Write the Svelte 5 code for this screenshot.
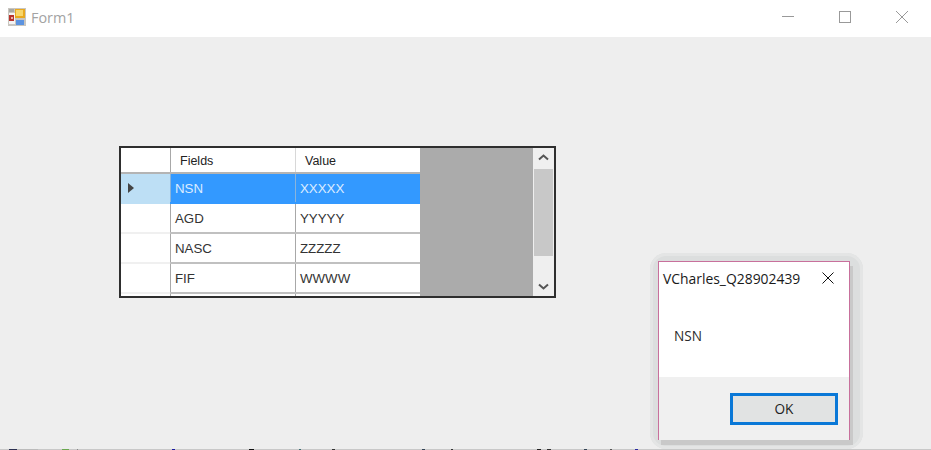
<script>
  const rows = [
    { field: 'NSN', value: 'XXXXX', current: true },
    { field: 'AGD', value: 'YYYYY' },
    { field: 'NASC', value: 'ZZZZZ' },
    { field: 'FIF', value: 'WWWW' }
  ];
</script>

<div class="window">
  <header class="titlebar">
    <div class="title">
      <svg class="app-icon" width="18" height="18" viewBox="0 0 18 18">
        <rect x="0" y="0" width="18" height="18" fill="#c9c6c0" />
        <rect x="1" y="5" width="6" height="11" fill="#f4f4f4" />
        <rect x="1" y="7" width="5" height="6" fill="#b8332c" />
        <rect x="3" y="9" width="2" height="2" fill="#e8b0a8" />
        <rect x="7" y="1" width="10" height="9" fill="#e9a91f" />
        <rect x="8" y="2" width="7" height="6" fill="#f8d66a" />
        <rect x="8" y="12" width="8" height="5" fill="#5c93e0" />
        <rect x="1" y="1" width="5" height="3" fill="#a8a8a4" />
      </svg>
      <span>Form1</span>
    </div>
    <div class="controls">
      <svg width="12" height="12" viewBox="0 0 12 12"><path d="M0 5.5H12" stroke="#999" fill="none" /></svg>
      <svg width="12" height="12" viewBox="0 0 12 12"><rect x="0.5" y="0.5" width="11" height="11" stroke="#999" fill="none" /></svg>
      <svg width="12" height="12" viewBox="0 0 12 12"><path d="M0 0L12 12M12 0L0 12" stroke="#999" fill="none" /></svg>
    </div>
  </header>

  <main class="client">
    <section class="grid">
      <div class="cells">
        <div class="row head">
          <div class="rowhead"></div>
          <div class="cell">Fields</div>
          <div class="cell">Value</div>
        </div>
        {#each rows as row}
          <div class="row" class:current={row.current}>
            <div class="rowhead">
              {#if row.current}
                <svg width="6" height="10" viewBox="0 0 6 10"><path d="M0 0L6 5L0 10Z" fill="#444" /></svg>
              {/if}
            </div>
            <div class="cell">{row.field}</div>
            <div class="cell">{row.value}</div>
          </div>
        {/each}
        <div class="row stub">
          <div class="rowhead"></div>
          <div class="cell"></div>
          <div class="cell"></div>
        </div>
      </div>
      <div class="empty"></div>
      <div class="scrollbar">
        <svg width="11" height="7" viewBox="0 0 11 7"><path d="M1 5.5L5.5 1.5L10 5.5" stroke="#555" stroke-width="2" fill="none" /></svg>
        <div class="thumb"></div>
        <svg width="11" height="7" viewBox="0 0 11 7"><path d="M1 1.5L5.5 5.5L10 1.5" stroke="#555" stroke-width="2" fill="none" /></svg>
      </div>
    </section>
  </main>

  <div class="specks"></div>

  <aside class="halo">
    <div class="dialog">
      <div class="dialog-body">
        <div class="dialog-title">
          <span>VCharles_Q28902439</span>
          <svg width="12" height="12" viewBox="0 0 12 12"><path d="M0.5 0.5L11.5 11.5M11.5 0.5L0.5 11.5" stroke="#111" fill="none" /></svg>
        </div>
        <p>NSN</p>
      </div>
      <div class="dialog-foot">
        <button>OK</button>
      </div>
    </div>
  </aside>
</div>

<style>
  :global(body) {
    margin: 0;
    background: #eeeeee;
  }
  .window {
    position: relative;
    width: 931px;
    height: 450px;
    overflow: hidden;
    display: flex;
    flex-direction: column;
    background: #eeeeee;
    font-family: "Liberation Sans", sans-serif;
  }
  .titlebar {
    height: 37px;
    flex: none;
    box-sizing: border-box;
    padding-bottom: 3px;
    background: #fff;
    display: flex;
    justify-content: space-between;
    align-items: center;
  }
  .title {
    display: flex;
    align-items: center;
    gap: 5px;
    padding-left: 8px;
    font-family: "Open Sans", sans-serif;
    font-size: 14.4px;
    color: #a3a3a3;
  }
  .controls {
    display: flex;
    gap: 45px;
    padding-right: 23px;
  }
  .controls svg { display: block; }
  .client {
    flex: 1;
    padding: 109px 0 0 119px;
  }
  .grid {
    width: 437px;
    height: 152px;
    box-sizing: border-box;
    border: 2px solid #2e2e2e;
    display: flex;
    background: #ababab;
  }
  .cells {
    width: 299px;
    overflow: hidden;
    flex: none;
    background: #ababab;
  }
  .empty { flex: 1; }
  .row {
    display: flex;
    height: 30px;
    box-sizing: border-box;
    border-bottom: 2px solid #c0c0c0;
    background: #fff;
    font-size: 13.3px;
    color: #333;
  }
  .row.head {
    height: 26px;
    border-bottom: 2px solid #b4b4b4;
    font-size: 12.5px;
    color: #222;
  }
  .rowhead {
    width: 49px;
    flex: none;
    display: flex;
    align-items: center;
    padding-left: 7px;
    box-sizing: border-box;
    background: #fff;
    border-bottom: 2px solid #f0f0f0;
    margin-bottom: -2px;
  }
  .head .rowhead { border-bottom: 0; margin: 0; }
  .cell {
    width: 125px;
    flex: none;
    box-sizing: border-box;
    border-left: 1px solid #a8a8a8;
    padding-left: 4px;
    line-height: 29px;
    white-space: nowrap;
  }
  .head .cell {
    padding-left: 9px;
    line-height: 27px;
    border-left-color: #d8d8d8;
  }
  .head .cell:nth-child(2) { border-left-color: #a8a8a8; }
  .current { background: #3399ff; color: #dcecff; border-bottom-color: #3399ff; }
  .current .rowhead {
    background: #bddff5;
    border-bottom-color: #bddff5;
  }
  .current .cell { border-left-color: #8ab4dc; }
  .stub .rowhead { border-bottom: 0; }
  .scrollbar {
    width: 21px;
    flex: none;
    background: #efefef;
    display: flex;
    flex-direction: column;
    align-items: center;
    justify-content: space-between;
    padding: 6px 0;
    box-sizing: border-box;
    position: relative;
  }
  .thumb {
    position: absolute;
    top: 21px;
    left: 1px;
    right: 1px;
    height: 87px;
    background: #c8c8c8;
  }
  .specks {
    position: absolute;
    left: 0;
    right: 0;
    bottom: 0;
    height: 1px;
    background: linear-gradient(90deg,
      #c8c8c8 9px, #2c3050 9px 17px, #bbb 17px 38px, #c8c8c8 38px 62px, #6aa84f 62px 69px,
      #c8c8c8 69px 77px, #888 77px 78px, #c8c8c8 78px 172px, #1a1aa0 172px 175px,
      #c8c8c8 175px 249px, #111 249px 254px, #c8c8c8 254px 299px, #3a6a70 299px 301px,
      #c8c8c8 301px 332px, #333 332px 335px, #c8c8c8 335px 422px, #345 422px 425px,
      #c8c8c8 425px 451px, #333 451px 453px, #c8c8c8 453px 537px, #222 537px 541px,
      #c8c8c8 541px 547px, #333 547px 551px, #c8c8c8 551px 584px, #345 584px 587px,
      #c8c8c8 587px 610px, #555 610px 612px, #c8c8c8 612px 635px, #2a2aa0 635px 638px,
      #c8c8c8 638px);
  }
  .halo {
    position: absolute;
    left: 650px;
    top: 253px;
    width: 213px;
    height: 196px;
    box-sizing: border-box;
    padding: 8px;
    border-radius: 16px;
    background: #dcdede;
    box-shadow: inset 0 0 0 3px #e4e5e5;
  }
  .dialog {
    width: 192px;
    height: 179px;
    box-sizing: border-box;
    border: 1px solid #c8709c;
    border-bottom: 0;
    box-shadow: 3px 5px 0 0 #c9c9c9;
    background: #fff;
    display: flex;
    flex-direction: column;
  }
  .dialog-body { flex: 1; background: #fff; }
  .dialog-title {
    display: flex;
    justify-content: space-between;
    align-items: center;
    padding: 5px 15px 0 4px;
    font-family: "Open Sans", sans-serif;
    font-size: 13.9px;
    color: #1a1a1a;
    height: 22px;
  }
  p {
    margin: 38px 0 0 15px;
    font-family: "Open Sans", sans-serif;
    font-size: 13.6px;
    color: #2a2a2a;
    line-height: 18px;
  }
  .dialog-foot {
    height: 63px;
    flex: none;
    background: #f0f0f0;
    display: flex;
    justify-content: flex-end;
    padding: 16px 11px 0 0;
    box-sizing: border-box;
  }
  button {
    width: 108px;
    height: 32px;
    box-sizing: border-box;
    border: 3px solid #0a78d7;
    background: #e1e3e3;
    font: 13.6px "Open Sans", sans-serif;
    color: #222;
    padding: 0 0 2px;
  }
</style>
